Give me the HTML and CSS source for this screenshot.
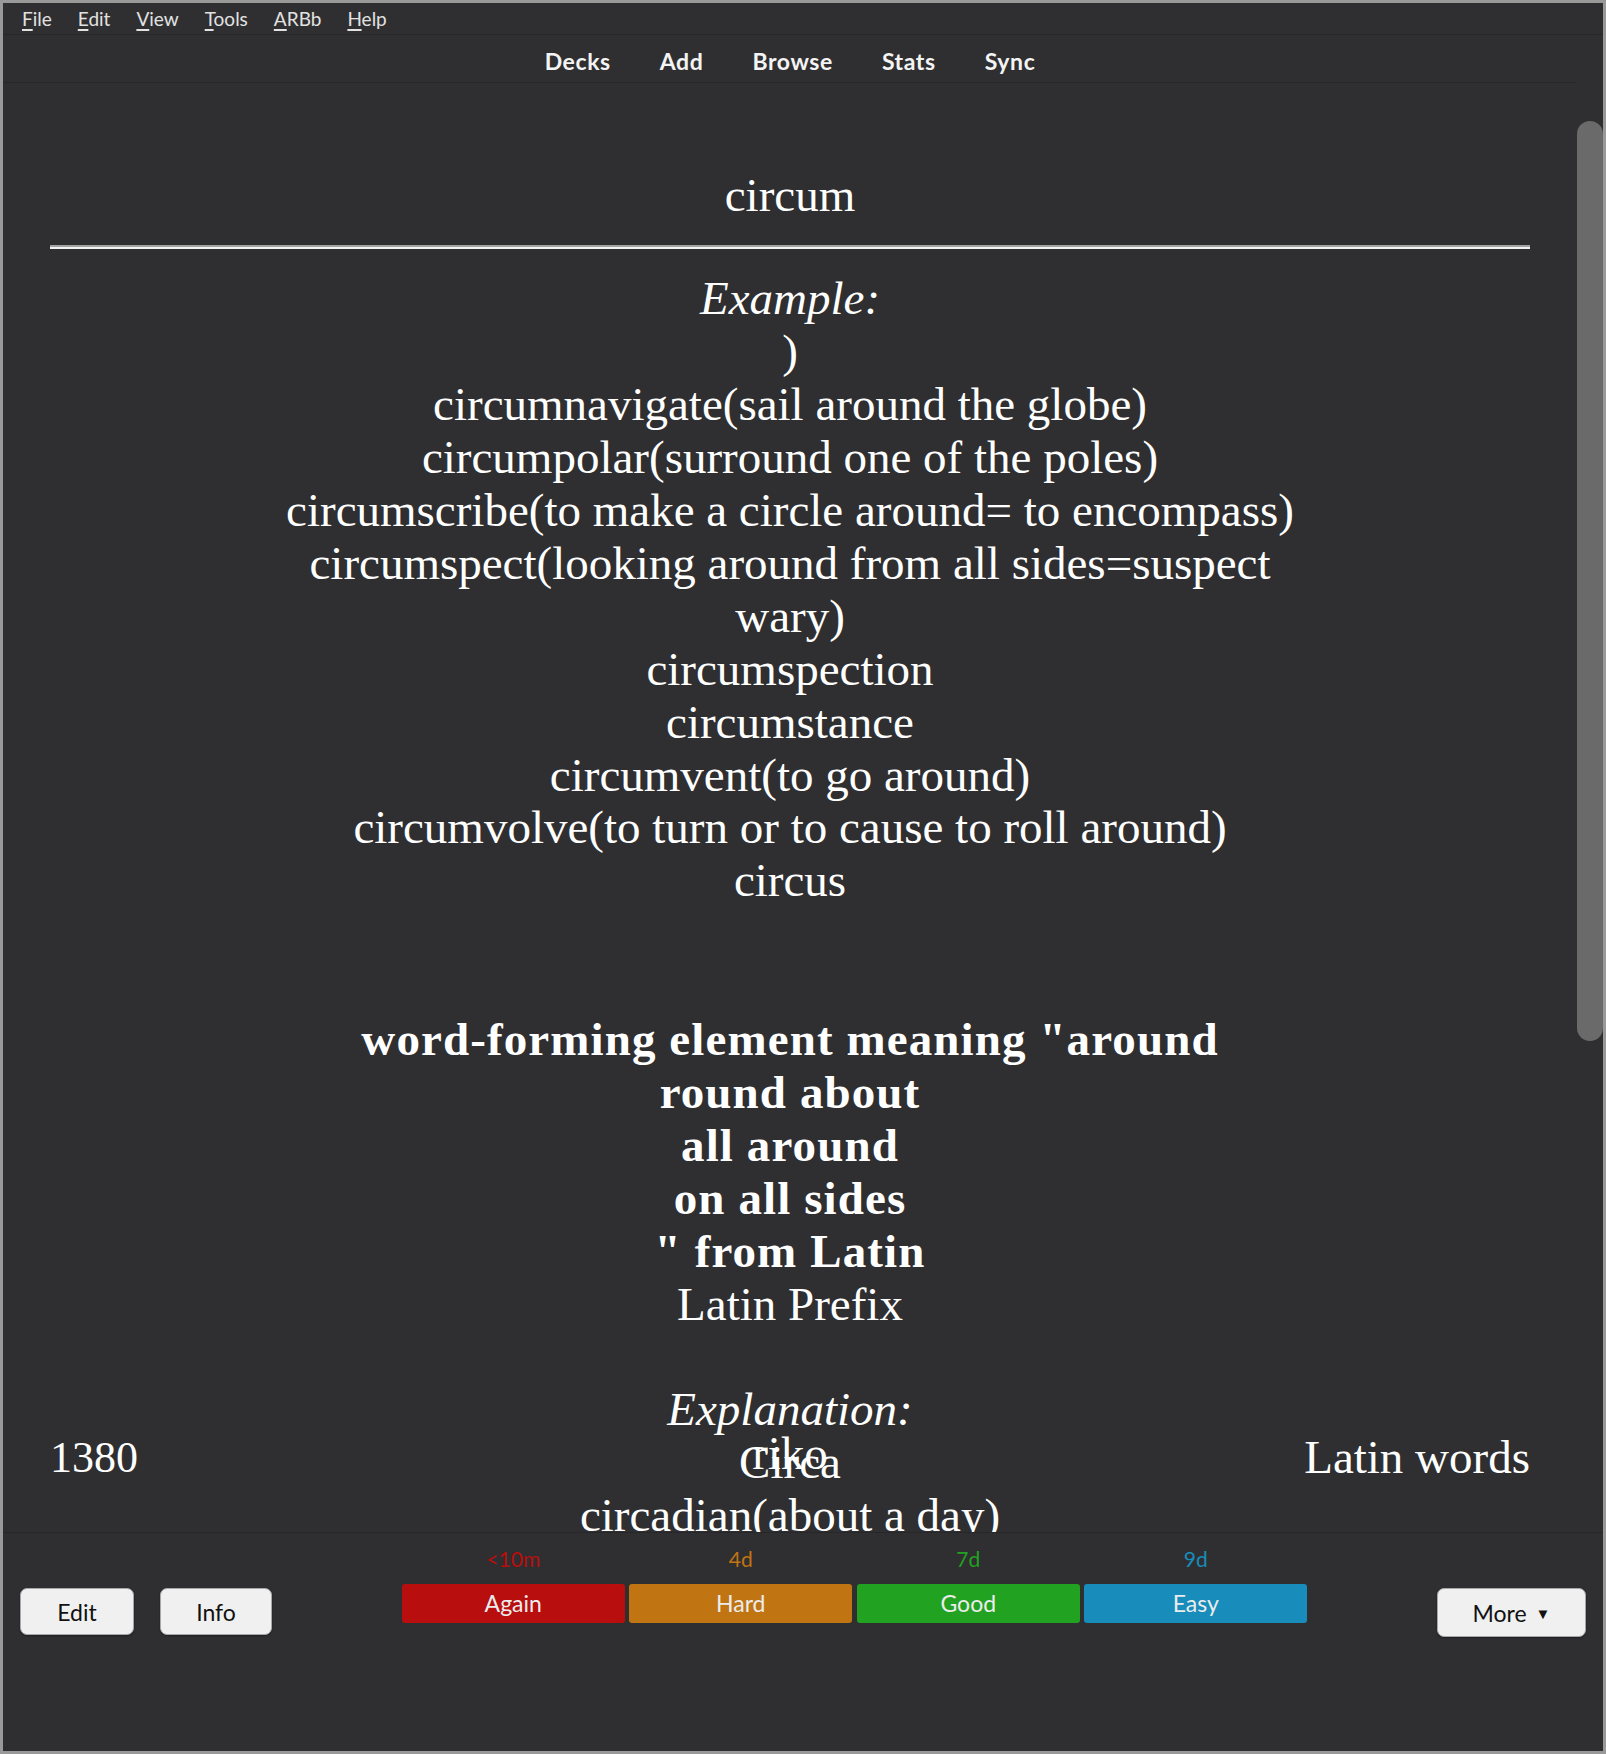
FILE: index.html
```html
<!DOCTYPE html>
<html lang="en">
<head>
<meta charset="utf-8">
<title>Anki</title>
<link rel="stylesheet" href="styles.css">
</head>
<body>
<div class="window">
  <nav class="menubar">
    <span class="menu-item"><span class="mn">F</span>ile</span>
    <span class="menu-item"><span class="mn">E</span>dit</span>
    <span class="menu-item"><span class="mn">V</span>iew</span>
    <span class="menu-item"><span class="mn">T</span>ools</span>
    <span class="menu-item"><span class="mn">A</span>RBb</span>
    <span class="menu-item"><span class="mn">H</span>elp</span>
  </nav>
  <nav class="toolbar">
    <span class="tool-link">Decks</span>
    <span class="tool-link">Add</span>
    <span class="tool-link">Browse</span>
    <span class="tool-link">Stats</span>
    <span class="tool-link">Sync</span>
  </nav>
  <main class="webview">
    <div class="card">
      <div class="front">circum</div>
      <hr class="answer">
      <div class="back"><i>Example:</i><br>)<br>circumnavigate(sail around the globe)<br>circumpolar(surround one of the poles)<br>circumscribe(to make a circle around= to encompass)<br>circumspect(looking around from all sides=suspect<br>wary)<br>circumspection<br>circumstance<br>circumvent(to go around)<br>circumvolve(to turn or to cause to roll around)<br>circus<br><br><br><b>word-forming element meaning "around<br>round about<br>all around<br>on all sides<br>" from Latin</b><br>Latin Prefix<br><br><i>Explanation:</i><br>Circa<br>circadian(about a day)<br>circuit<br>circle</div>
    </div>
    <div class="card-footer">
      <span class="foot-left">1380</span>
      <span class="foot-mid">riko</span>
      <span class="foot-right">Latin words</span>
    </div>
    <div class="scroll-thumb"></div>
  </main>
  <footer class="bottombar">
    <div class="left-group">
      <button class="btn btn-edit">Edit</button>
      <button class="btn btn-info">Info</button>
    </div>
    <div class="answers">
      <div class="answer-col">
        <div class="due due-again">&lt;10m</div>
        <div class="ans ans-again">Again</div>
      </div>
      <div class="answer-col">
        <div class="due due-hard">4d</div>
        <div class="ans ans-hard">Hard</div>
      </div>
      <div class="answer-col">
        <div class="due due-good">7d</div>
        <div class="ans ans-good">Good</div>
      </div>
      <div class="answer-col">
        <div class="due due-easy">9d</div>
        <div class="ans ans-easy">Easy</div>
      </div>
    </div>
    <button class="btn btn-more">More <span class="tri">▼</span></button>
  </footer>
</div>
</body>
</html>
```

FILE: styles.css
```css
html, body {
  margin: 0;
  padding: 0;
  background: #999999;
}

.window {
  width: 1600px;
  height: 1748px;
  border: 3px solid #999999;
  background: #2f2f31;
  display: flex;
  flex-direction: column;
  overflow: hidden;
  font-family: Lato, "Open Sans", sans-serif;
}

.menubar {
  height: 31px;
  flex: none;
  display: flex;
  align-items: center;
  gap: 26px;
  padding-left: 19px;
  border-bottom: 1px solid #27272a;
  font-size: 19px;
  color: #e2e2e2;
}

.mn {
  text-decoration: underline;
  text-decoration-thickness: 2px;
  text-underline-offset: 3px;
}

.toolbar {
  height: 48px;
  flex: none;
  display: flex;
  align-items: center;
  justify-content: center;
  gap: 49px;
  margin-right: 26px;
  padding-top: 4px;
  box-sizing: border-box;
  border-bottom: 1px solid #27272a;
  font-size: 23px;
  letter-spacing: 0.6px;
  font-weight: 700;
  color: #f4f4f4;
}

.webview {
  flex: 1;
  position: relative;
  overflow: hidden;
  border-bottom: 1px solid #27272a;
}

.card {
  margin-right: 26px;
  padding: 85.5px 47px 0;
  font-family: "Liberation Serif", "Times New Roman", serif;
  font-size: 47px;
  line-height: 52.9px;
  text-align: center;
  color: #ffffff;
}

.card b {
  letter-spacing: 1.1px;
}

.answer {
  margin: 23.5px 0;
  height: 0;
  border: none;
  border-top: 2px solid #a2a2a2;
  border-bottom: 2px solid #f2f2f2;
}

.card-footer {
  position: absolute;
  left: 47px;
  right: 73px;
  bottom: 48px;
  display: grid;
  grid-template-columns: 1fr auto 1fr;
  font-family: "Liberation Serif", "Times New Roman", serif;
  font-size: 47px;
  line-height: 53px;
  color: #ffffff;
}

.foot-left { justify-self: start; font-size: 44px; }
.foot-mid { justify-self: center; position: relative; top: -4px; }
.foot-right { justify-self: end; }

.scroll-thumb {
  position: absolute;
  right: 0;
  top: 38px;
  width: 26px;
  height: 920px;
  border-radius: 13px;
  background: #6a6a6a;
}

.bottombar {
  height: 218px;
  flex: none;
  display: flex;
  justify-content: space-between;
  align-items: flex-start;
  padding: 0 17px;
  box-sizing: border-box;
}

.left-group {
  display: flex;
  gap: 26px;
  margin-top: 55px;
}

.btn {
  height: 47px;
  background: #f0f0f0;
  border: 1px solid #a6a6ab;
  border-radius: 7px;
  box-shadow: 0 1px 2px rgba(0, 0, 0, 0.35);
  font-family: Lato, "Open Sans", sans-serif;
  font-size: 23px;
  color: #111111;
  padding: 0;
}

.btn-edit { width: 114px; }
.btn-info { width: 112px; }

.btn-more {
  width: 149px;
  height: 49px;
  margin-top: 55px;
}

.tri {
  font-size: 15px;
  vertical-align: 3px;
  margin-left: 3px;
}

.answers {
  display: grid;
  grid-template-columns: repeat(4, 223px);
  column-gap: 4.5px;
  margin-top: 13px;
}

.answer-col {
  display: flex;
  flex-direction: column;
  align-items: stretch;
  text-align: center;
}

.due {
  height: 26px;
  line-height: 26px;
  font-size: 21px;
}

.ans {
  margin-top: 12px;
  height: 39px;
  line-height: 39px;
  border-radius: 3px;
  font-size: 23px;
  color: #ececec;
}

.due-again { color: #b90e0e; }
.due-hard { color: #c17412; }
.due-good { color: #21a221; }
.due-easy { color: #188cba; }

.ans-again { background: #b90e0e; }
.ans-hard { background: #c17412; }
.ans-good { background: #21a221; }
.ans-easy { background: #188cba; }
```
